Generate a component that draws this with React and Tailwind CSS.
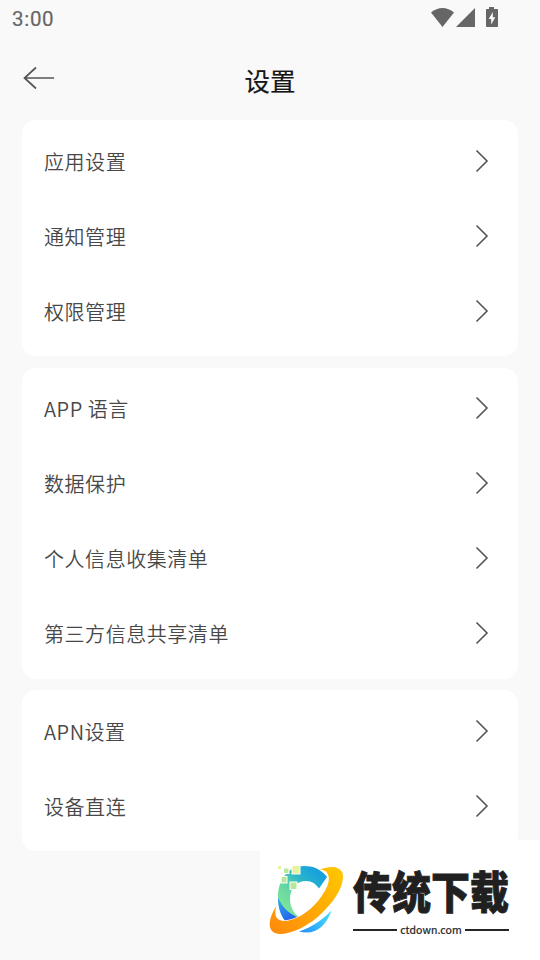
import React from 'react';

const SETTING_GROUPS = [
  { id: 'general', items: ['应用设置', '通知管理', '权限管理'] },
  { id: 'privacy', items: ['APP 语言', '数据保护', '个人信息收集清单', '第三方信息共享清单'] },
  { id: 'device', items: ['APN设置', '设备直连'] },
];

function StatusBar() {
  return (
    <div className="flex h-9 items-center justify-between pl-3 pr-[41px] text-[#666666]">
      <span className="pt-0.5 font-['Roboto',sans-serif] text-[20.5px] font-normal leading-none tracking-[0.7px] [-webkit-text-stroke:0.2px_#666666]">3:00</span>
      <svg className="-mt-0.5" width="68" height="20" viewBox="0 -1 68 20" fill="currentColor">
        <path d="M0 4.6C7-1.500 16-1.500 23 4.6L11.5 19Z" />
        <path d="M44 0V19H25Z" />
        <path
          fillRule="evenodd"
          d="M58 -1h5v2h3q1 0 1 1V18q0 1-1 1H56q-1 0-1-1V2q0-1 1-1h2ZM61.800 4L57.700 11h2.500v5.500L64.300 9.200h-2.500Z"
        />
      </svg>
    </div>
  );
}

function Header() {
  return (
    <header className="grid h-[84px] grid-cols-[1fr_auto_1fr] items-center px-[23px]">
      <svg width="32" height="24" viewBox="0 0 32 24" fill="none" stroke="#555555" strokeWidth="1.7">
        <path d="M31 12H1.500M13 1.500L1.500 12L13 22.500" />
      </svg>
      <h1 className="pt-1 text-[25.5px] font-normal leading-none text-[#161616] [-webkit-text-stroke:0.2px_#161616]">设置</h1>
    </header>
  );
}

function SettingRow({ label }) {
  return (
    <button className="flex h-[75px] w-full items-center justify-between pl-[22px] pr-[29px] text-left">
      <span className="pt-px text-[20px] font-[350] leading-none tracking-[0.55px]">{label}</span>
      <svg className="-mt-px" width="14" height="24" viewBox="0 0 14 24" fill="none" stroke="#555555" strokeWidth="1.6">
        <path d="M1.500 1.500L12 12L1.500 22.500" />
      </svg>
    </button>
  );
}

function BrandMark() {
  return (
    <svg className="shrink-0" width="90" height="120" viewBox="0 0 90 120">
      <defs>
        <linearGradient id="arc" x1="20" y1="80" x2="65" y2="32" gradientUnits="userSpaceOnUse">
          <stop offset="0" stopColor="#8fee8e" />
          <stop offset=".42" stopColor="#66d6a4" />
          <stop offset=".7" stopColor="#25b3cc" />
          <stop offset="1" stopColor="#159be3" />
        </linearGradient>
        <linearGradient id="ring" x1="15" y1="90" x2="78" y2="32" gradientUnits="userSpaceOnUse">
          <stop offset="0" stopColor="#ff8d0b" />
          <stop offset="1" stopColor="#ffc400" />
        </linearGradient>
        <linearGradient id="tail" x1="43" y1="92" x2="69" y2="73" gradientUnits="userSpaceOnUse">
          <stop offset="0" stopColor="#2795f5" />
          <stop offset="1" stopColor="#42dcff" />
        </linearGradient>
        <linearGradient id="base" x1="19" y1="60" x2="34" y2="82" gradientUnits="userSpaceOnUse">
          <stop offset="0" stopColor="#2ba5ed" />
          <stop offset="1" stopColor="#2459ec" />
        </linearGradient>
      </defs>
      <path d="M67 37C61 29 53 26 44 26C28 26 18 40 18 57C18 68 21 77 27 83L40 78C33 73 30 66 30 59C30 48 37 41 46 41C52 41 56 44 59 48.500Z" fill="url(#arc)" />
      <path d="M18 57C18 68 21 77 27 83L39 78C29 74 21 66 18 57Z" fill="url(#base)" />
      <path d="M39 91.500C52 87 62 80 71.500 70.500C66 86 55 96 39 91.500Z" fill="url(#tail)" />
      <path
        d="M60 29.500C69 26 79 25 82.500 33C85 42 78 57 64 71C50 86 31 94 20 94C7 94 7 80 16.500 66C14 73 15 80 23 81C35 81 48 73 58 61C66 51 71 41 68 34.500C66.500 31 64 30 60 29.500Z"
        fill="url(#ring)"
        stroke="#fff"
        strokeWidth="1.2"
        paintOrder="stroke"
      />
      <g stroke="#fff" strokeWidth="1">
        <rect x="17.500" y="25.500" width="4" height="4" fill="#e5f3a4" />
        <rect x="23.500" y="28" width="5.500" height="5.500" fill="#b9e99a" />
        <rect x="32" y="25.500" width="8" height="8.500" fill="#e7f29c" />
        <rect x="21" y="36.500" width="6" height="6.500" fill="#b5e89a" />
        <rect x="30" y="42" width="7" height="7.500" fill="#b5e89a" />
      </g>
    </svg>
  );
}

function Watermark() {
  return (
    <div className="absolute bottom-0 right-0 flex h-[120px] w-[280px] bg-white text-[#202020]">
      <BrandMark />
      <div className="w-[160px] pl-[3px] pt-[30px]">
        <div className="h-[45px] origin-top scale-y-[1.15] whitespace-nowrap text-[39px] font-black leading-[34px] [-webkit-text-stroke:0.7px_#202020]">
          传统下载
        </div>
        <div className="flex h-[30px] w-[156px] items-center gap-[3px]">
          <span className="h-0.5 flex-1 bg-[#282424]" />
          <span className="text-[10.500px] font-normal leading-none tracking-[0.1px] [-webkit-text-stroke:0.2px_#202020]">ctdown.com</span>
          <span className="h-0.5 flex-1 bg-[#282424]" />
        </div>
      </div>
    </div>
  );
}

export default function App() {
  return (
    <div className="relative h-[960px] w-[540px] overflow-hidden bg-[#f9f9f9] font-['Noto_Sans_CJK_SC',sans-serif] text-[#484848]">
      <StatusBar />
      <Header />
      <main className="flex flex-col gap-[11.5px] px-[22px]">
        {SETTING_GROUPS.map((group) => (
          <section key={group.id} className="rounded-[14px] bg-white pb-[7.5px] pt-[3.5px]">
            {group.items.map((label) => (
              <SettingRow key={label} label={label} />
            ))}
          </section>
        ))}
      </main>
      <Watermark />
    </div>
  );
}
